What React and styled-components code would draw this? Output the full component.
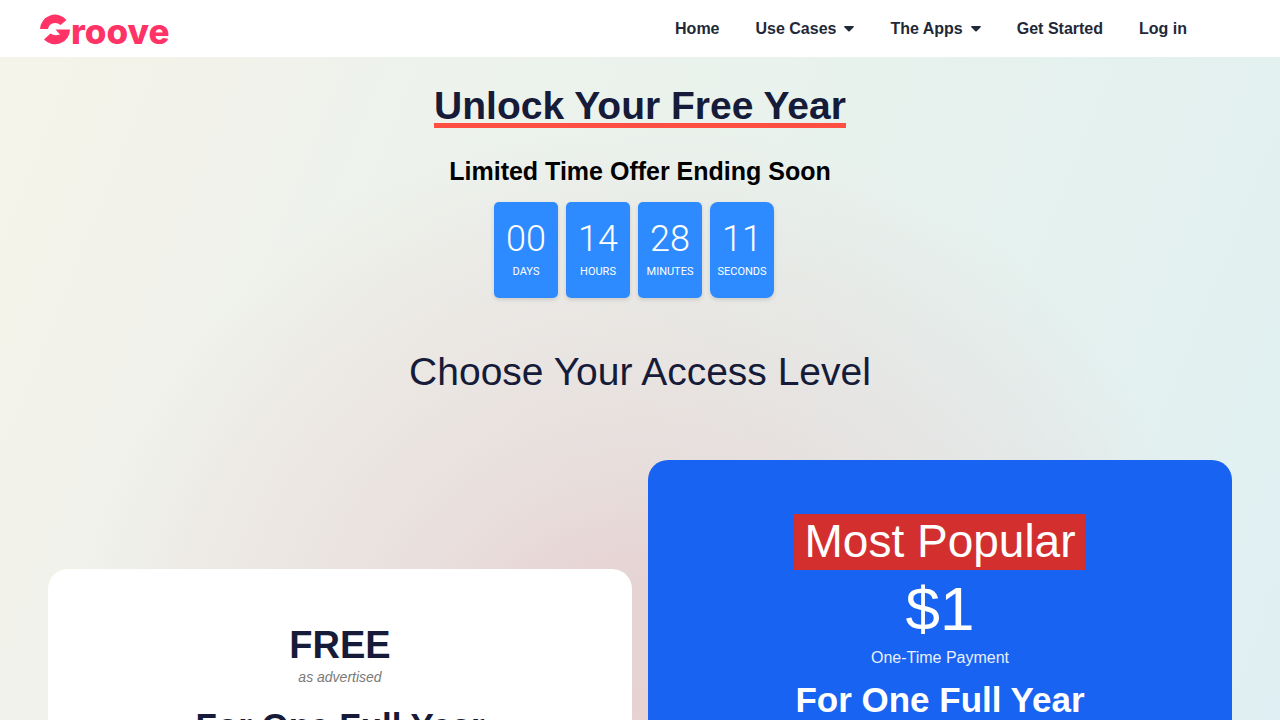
import React from 'react';
import styled, { createGlobalStyle } from 'styled-components';

const GlobalStyle = createGlobalStyle`
* { box-sizing: border-box; }
body {
  margin: 0;
  background: #f0f2ea;
  font-family: 'Liberation Sans', Arial, sans-serif;
  color: #151b38;
}
h1, h2, h3, p { margin: 0; }`;

const Header = styled.header`
display: flex;
align-items: center;
justify-content: space-between;
height: 57px;
padding: 0 93px 0 40px;
background: #ffffff;`;

const Logo = styled.a`
display: flex;
text-decoration: none;`;

const LogoText = styled.text`
font-family: Inter, sans-serif;
font-size: 35px;
font-weight: 800;`;

const Nav = styled.nav`
display: flex;
gap: 36px;`;

const NavLink = styled.a`
display: flex;
align-items: center;
gap: 8px;
color: #1f2937;
font-size: 16px;
font-weight: bold;
line-height: 24px;
text-decoration: none;`;

const Main = styled.main`
display: flex;
flex-direction: column;
align-items: center;
min-height: calc(100vh - 57px);
padding: 24px 48px 48px;
background:
  radial-gradient(circle 580px at 50% 643px, rgba(228, 178, 184, 0.5) 0%, rgba(228, 178, 184, 0.45) 25%, rgba(228, 178, 184, 0.33) 38%, rgba(228, 178, 184, 0.24) 54%, rgba(228, 178, 184, 0.12) 80%, rgba(228, 178, 184, 0) 100%),
  linear-gradient(112deg, #f5f4ea 0%, #f2f2ea 14%, #eff2ec 22%, #e8f2ed 54%, #e1f0f0 88%, #e0eff5 100%);`;

const Title = styled.h1`
padding-top: 8px;
border-bottom: 5px solid #ff4f43;
font-size: 39px;
line-height: 34px;`;

const Offer = styled.h2`
margin-top: 28px;
color: #000000;
font-size: 25px;
line-height: 30px;`;

const Timer = styled.div`
display: flex;
gap: 8px;
margin-top: 16px;
padding-right: 12px;`;

const TimeBox = styled.div`
display: flex;
flex-direction: column;
align-items: center;
width: 64px;
height: 96px;
padding-top: 13px;
border-radius: 5px;
background: #2e8bff;
box-shadow: 0 2px 4px rgba(0, 0, 0, 0.12);
color: #ffffff;
font-family: Roboto, 'Open Sans', sans-serif;

&:last-child { border-radius: 8px; }`;

const TimeValue = styled.span`
font-size: 36px;
font-weight: 300;
line-height: 48px;`;

const TimeLabel = styled.span`
font-size: 11px;
line-height: 18px;
text-transform: uppercase;`;

const Subtitle = styled.h2`
margin-top: 50px;
font-size: 39px;
font-weight: normal;
line-height: 48px;`;

const Plans = styled.section`
display: grid;
grid-template-columns: 1fr 1fr;
align-items: start;
gap: 16px;
width: 100%;
margin-top: 64px;`;

const Plan = styled.article`
display: flex;
flex-direction: column;
align-items: center;
margin-top: ${props => (props.$featured ? '0' : '109px')};
padding: 54px 48px 56px;
border-radius: 20px;
background: ${props => (props.$featured ? '#1863f1' : '#ffffff')};
color: ${props => (props.$featured ? '#ffffff' : 'inherit')};`;

const Badge = styled.p`
padding: 0 10px 2px;
background: #d32f2f;
font-size: 46px;
line-height: 54px;`;

const Price = styled.p`
margin-top: 4px;
font-size: 62px;
line-height: 70px;`;

const PlanName = styled.h3`
font-size: 38px;
line-height: 44px;`;

const Note = styled.p`
margin-bottom: ${props => (props.$muted ? '18px' : '7px')};
font-size: ${props => (props.$muted ? '14px' : '16px')};
font-style: ${props => (props.$muted ? 'italic' : 'normal')};
color: ${props => (props.$muted ? '#7a7a7a' : '#e8effe')};
line-height: ${props => (props.$muted ? '20px' : '28px')};`;

const Term = styled.h3`
font-size: 35px;
line-height: 42px;`;

const times = [
  { label: 'Days', value: '00' },
  { label: 'Hours', value: '14' },
  { label: 'Minutes', value: '28' },
  { label: 'Seconds', value: '11' },
];

const links = [
  { text: 'Home' },
  { text: 'Use Cases', menu: true },
  { text: 'The Apps', menu: true },
  { text: 'Get Started' },
  { text: 'Log in' },
];

const GrooveLogo = () => (
  <svg width="140" height="42" viewBox="0 -6 140 42" fill="#ff3366" aria-label="Groove">
    <path d="M0 15A15 15 0 0 1 26.500 6L20.500 11A7.500 7.500 0 0 0 8 15Z" />
    <path d="M15.500 15.500H30A15 15 0 0 1 4 25.500L10.500 19.500Q14 22.500 20 20.500Z" />
    <LogoText x="31" y="30">roove</LogoText>
  </svg>
);

const Caret = () => (
  <svg width="10" height="6" viewBox="0 0 10 6" fill="currentColor" aria-hidden="true">
    <path d="M1 0H9Q10.500 0.300 9.600 1.300L5.700 5.300Q5 5.900 4.300 5.300L0.400 1.300Q-0.500 0.300 1 0Z" />
  </svg>
);

const App = () => (
  <>
    <GlobalStyle />
    <Header>
      <Logo href="#home"><GrooveLogo /></Logo>
      <Nav>
        {links.map(link => (
          <NavLink key={link.text} href="#menu">
            {link.text}
            {link.menu && <Caret />}
          </NavLink>
        ))}
      </Nav>
    </Header>
    <Main>
      <Title>Unlock Your Free Year</Title>
      <Offer>Limited Time Offer Ending Soon</Offer>
      <Timer>
        {times.map(time => (
          <TimeBox key={time.label}>
            <TimeValue>{time.value}</TimeValue>
            <TimeLabel>{time.label}</TimeLabel>
          </TimeBox>
        ))}
      </Timer>
      <Subtitle>Choose Your Access Level</Subtitle>
      <Plans>
        <Plan>
          <PlanName>FREE</PlanName>
          <Note $muted>as advertised</Note>
          <Term>For One Full Year</Term>
        </Plan>
        <Plan $featured>
          <Badge>Most Popular</Badge>
          <Price>$1</Price>
          <Note>One-Time Payment</Note>
          <Term>For One Full Year</Term>
        </Plan>
      </Plans>
    </Main>
  </>
);

export default App;
